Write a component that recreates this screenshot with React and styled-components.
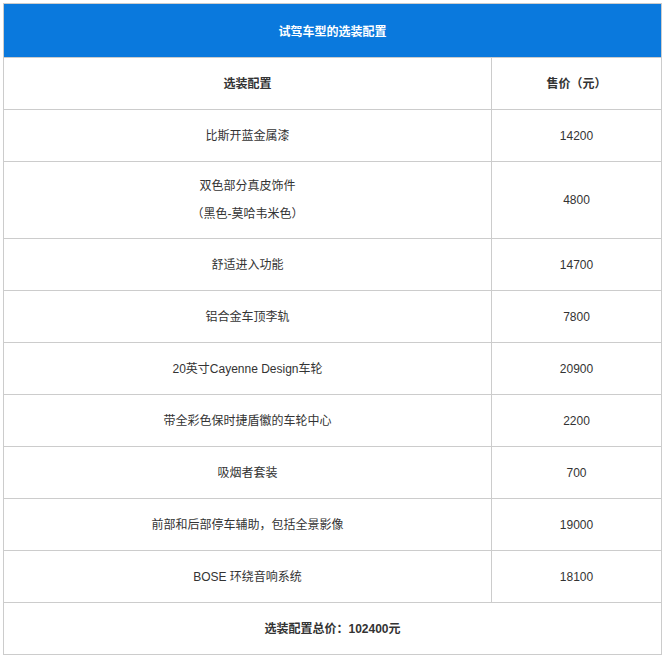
import React from "react";
import styled, { createGlobalStyle } from "styled-components";

const Global = createGlobalStyle`
  body { margin: 0; padding: 3px; background: #fff; font-family: "Liberation Sans", "Noto Sans CJK SC", sans-serif; }
`;

const Table = styled.table`
  width: 659px;
  border-collapse: collapse;
  font-size: 12px;
  color: #333;
`;

const Title = styled.th`
  background: #0a79dd;
  color: #fff;
  height: 51px;
  font-size: 12px;
  font-weight: bold;
  border: 1px solid #ccc;
  border-bottom: none;
`;

const Cell = styled.td`
  border: 1px solid #cccccc;
  text-align: center;
  height: ${(p) => (p.tall ? 76 : 51)}px;
  padding: 0;
  font-weight: ${(p) => (p.bold ? "bold" : "normal")};
  line-height: 28px;
  width: ${(p) => p.w || "auto"};
`;

const rows = [
  ["比斯开蓝金属漆", "14200"],
  [["双色部分真皮饰件", "（黑色-莫哈韦米色）"], "4800"],
  ["舒适进入功能", "14700"],
  ["铝合金车顶李轨", "7800"],
  ["20英寸Cayenne Design车轮", "20900"],
  ["带全彩色保时捷盾徽的车轮中心", "2200"],
  ["吸烟者套装", "700"],
  ["前部和后部停车辅助，包括全景影像", "19000"],
  ["BOSE 环绕音响系统", "18100"],
];

export default function App() {
  return (
    <>
      <Global />
      <Table>
        <thead>
          <tr><Title colSpan={2}>试驾车型的选装配置</Title></tr>
        </thead>
        <tbody>
          <tr>
            <Cell bold w="487px">选装配置</Cell>
            <Cell bold>售价（元）</Cell>
          </tr>
          {rows.map(([name, price], i) => (
            <tr key={i}>
              <Cell tall={Array.isArray(name)}>
                {Array.isArray(name) ? name.map((n) => <div key={n}>{n}</div>) : name}
              </Cell>
              <Cell>{price}</Cell>
            </tr>
          ))}
          <tr>
            <Cell bold colSpan={2}>选装配置总价：102400元</Cell>
          </tr>
        </tbody>
      </Table>
    </>
  );
}
